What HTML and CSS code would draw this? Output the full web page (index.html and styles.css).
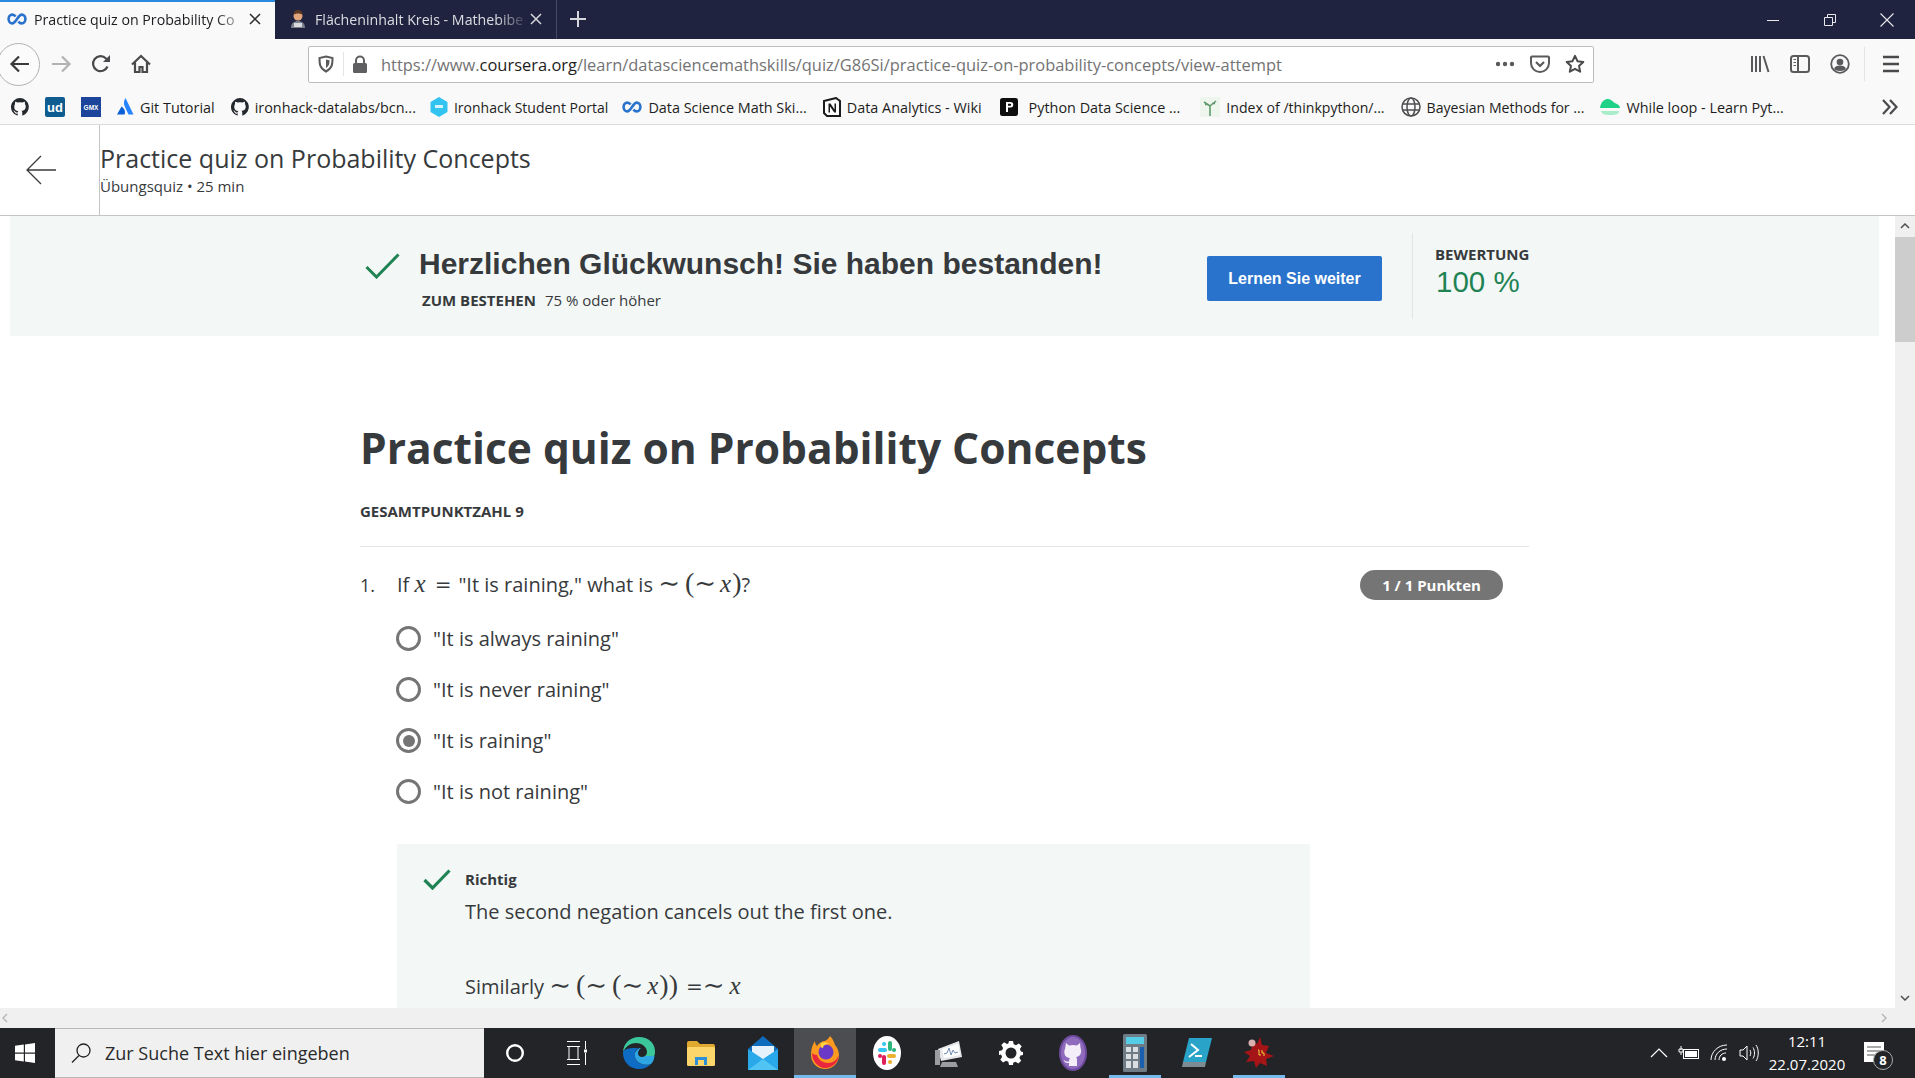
FILE: index.html
```html
<!DOCTYPE html>
<html lang="de">
<head>
    <meta charset="UTF-8">
    <title>Practice quiz on Probability Concepts</title>
    <link rel="stylesheet" href="styles.css">
</head>
<body>

<svg class="defs" width="0" height="0">
    <symbol id="coursera" viewBox="0 0 20 12">
        <path d="M8.6 3.6C7.6 2.2 6.6 1.6 5.3 1.6 3.2 1.6 1.6 3.6 1.6 6s1.6 4.4 3.7 4.4c3.6 0 5.8-8.800 9.400-8.800 2.100 0 3.700 2 3.700 4.400s-1.600 4.400-3.700 4.400c-1.300 0-2.300-.6-3.300-2" fill="none" stroke="#2a73cc" stroke-width="2.600"/>
    </symbol>
    <symbol id="github" viewBox="0 0 16 16">
        <path fill="#24292e" d="M8 0a8 8 0 0 0-2.500 15.600c.4.100.5-.2.500-.4v-1.400c-2.200.5-2.700-1-2.700-1-.4-.9-.9-1.200-.9-1.200-.7-.5.100-.5.100-.5.800.1 1.200.8 1.200.8.700 1.200 1.900.9 2.300.7.100-.5.300-.9.500-1.100-1.800-.2-3.600-.9-3.600-4 0-.9.300-1.600.8-2.100-.1-.2-.4-1 .1-2.100 0 0 .7-.2 2.200.8a7.600 7.600 0 0 1 4 0c1.500-1 2.200-.8 2.200-.8.400 1.100.2 1.900.1 2.100.5.600.8 1.300.8 2.100 0 3.100-1.900 3.700-3.700 3.900.3.300.6.800.6 1.500v2.200c0 .2.100.5.600.4A8 8 0 0 0 8 0z"/>
    </symbol>
</svg>

<header class="tabstrip">
    <div class="tab tab-active">
        <svg class="tab-icon" width="20" height="12"><use href="#coursera"/></svg>
        <span class="tab-title">Practice quiz on Probability Co</span>
        <svg class="tab-close" width="14" height="14" viewBox="0 0 14 14"><path d="M2 2l10 10M12 2L2 12" stroke="#2b2b2b" stroke-width="1.500"/></svg>
    </div>
    <div class="tab tab-other">
        <svg class="tab-icon" width="20" height="20" viewBox="0 0 20 20">
            <path d="M3 19c0-5 3-7 7-7s7 2 7 7z" fill="#7a7f8c"/>
            <circle cx="10" cy="7" r="4.500" fill="#e2a77c"/>
            <path d="M5.500 6c0-4 2-5 4.500-5s4.500 1 4.500 5c-2-2-7-2-9 0z" fill="#5a3a22"/>
            <rect x="6" y="14" width="8" height="4" fill="#d9d9de"/>
        </svg>
        <span class="tab-title">Flächeninhalt Kreis - Mathebibe</span>
        <svg class="tab-close" width="14" height="14" viewBox="0 0 14 14"><path d="M2 2l10 10M12 2L2 12" stroke="#d6d7dc" stroke-width="1.500"/></svg>
    </div>
    <div class="tab-new">
        <svg width="18" height="18" viewBox="0 0 18 18"><path d="M9 1v16M1 9h16" stroke="#d6d7dc" stroke-width="2"/></svg>
    </div>
    <div class="win-controls">
        <button class="win-btn"><svg width="14" height="14" viewBox="0 0 14 14"><path d="M1 7.500h12" stroke="#e8e8ec"/></svg></button>
        <button class="win-btn"><svg width="14" height="14" viewBox="0 0 14 14"><path d="M1.500 4.500h8v8h-8zM4.500 4.500v-3h8v8h-3" fill="none" stroke="#e8e8ec"/></svg></button>
        <button class="win-btn"><svg width="16" height="16" viewBox="0 0 16 16"><path d="M1.500 1.500l13 13M14.500 1.500l-13 13" stroke="#e8e8ec" stroke-width="1.100"/></svg></button>
    </div>
</header>

<nav class="navbar">
    <div class="nav-back">
        <svg width="22" height="22" viewBox="0 0 22 22"><path d="M20 11H3M10 3.500L2.500 11l7.500 7.500" fill="none" stroke="#3a3a3c" stroke-width="2.200"/></svg>
    </div>
    <div class="nav-btn">
        <svg width="22" height="22" viewBox="0 0 22 22"><path d="M2 11h17M12 3.500l7.500 7.500-7.500 7.500" fill="none" stroke="#b2b2b4" stroke-width="2.200"/></svg>
    </div>
    <div class="nav-btn">
        <svg width="22" height="22" viewBox="0 0 22 22"><path d="M17.500 13.500A7.500 7.500 0 1 1 16 5.500L19 8" fill="none" stroke="#4a4a4c" stroke-width="2.200"/><path d="M20 2v7h-7z" fill="#4a4a4c"/></svg>
    </div>
    <div class="nav-btn">
        <svg width="22" height="22" viewBox="0 0 22 22"><path d="M2 11.500L11 3l9 8.500M5 9.500V19h4.500v-5h3v5H17V9.500" fill="none" stroke="#4a4a4c" stroke-width="2.200"/></svg>
    </div>

    <div class="urlbar">
        <svg class="url-shield" width="18" height="18" viewBox="0 0 18 18"><path d="M9 1.500l6.500 1.500c0 6 0 10-6.500 13.500C2.500 13 2.500 9 2.500 3z" fill="none" stroke="#5a5a5c" stroke-width="2"/><path d="M9 4.500l3.500.8c0 3.500-.3 5.500-3.500 7.700z" fill="#5a5a5c"/></svg>
        <span class="url-sep"></span>
        <svg class="url-lock" width="16" height="19" viewBox="0 0 16 19"><path d="M4 8V5.500a4 4 0 0 1 8 0V8" fill="none" stroke="#5f5f61" stroke-width="2"/><rect x="1" y="8" width="14" height="10" rx="1.500" fill="#5f5f61"/></svg>
        <span class="url-text">https://www.<b>coursera.org</b>/learn/datasciencemathskills/quiz/G86Si/practice-quiz-on-probability-concepts/view-attempt</span>
        <svg class="url-action" width="20" height="6" viewBox="0 0 20 6"><circle cx="3" cy="3" r="2.200" fill="#5a5a5c"/><circle cx="10" cy="3" r="2.200" fill="#5a5a5c"/><circle cx="17" cy="3" r="2.200" fill="#5a5a5c"/></svg>
        <svg class="url-action" width="20" height="20" viewBox="0 0 20 20"><path d="M2 2.500h16a1 1 0 0 1 1 1V9a9 9 0 0 1-18 0V3.500a1 1 0 0 1 1-1z" fill="none" stroke="#5a5a5c" stroke-width="2"/><path d="M6 8l4 4 4-4" fill="none" stroke="#5a5a5c" stroke-width="2.200"/></svg>
        <svg class="url-action" width="20" height="20" viewBox="0 0 20 20"><path d="M10 1.800l2.500 5.400 5.800.7-4.300 4 1.200 5.800-5.200-2.900-5.200 2.900 1.200-5.800-4.300-4 5.800-.7z" fill="none" stroke="#4a4a4c" stroke-width="2" stroke-linejoin="round"/></svg>
    </div>

    <div class="nav-tools">
        <div class="nav-btn">
            <svg width="20" height="20" viewBox="0 0 20 20"><path d="M2 2v16M6 2v16M10 2v16M13.500 2l5 16" fill="none" stroke="#5a5a5c" stroke-width="2"/></svg>
        </div>
        <div class="nav-btn">
            <svg width="20" height="20" viewBox="0 0 20 20"><rect x="1" y="2" width="18" height="16" rx="2.500" fill="none" stroke="#5a5a5c" stroke-width="2"/><path d="M8 2v16" stroke="#5a5a5c" stroke-width="2"/><path d="M3.500 5.500h2.500M3.500 8.500h2.500M3.500 11.500h2.500" stroke="#5a5a5c"/></svg>
        </div>
        <div class="nav-btn">
            <svg width="20" height="20" viewBox="0 0 20 20"><circle cx="10" cy="10" r="8.800" fill="none" stroke="#5a5a5c" stroke-width="1.800"/><circle cx="10" cy="8" r="3.300" fill="#5a5a5c"/><path d="M4 15c1-3 3-3.500 6-3.500s5 .5 6 3.500c-2 2.600-10 2.600-12 0z" fill="#5a5a5c"/></svg>
        </div>
        <span class="nav-sep"></span>
        <div class="nav-btn">
            <svg width="18" height="20" viewBox="0 0 18 20"><path d="M1 3h16M1 10h16M1 17h16" stroke="#4a4a4c" stroke-width="2.400"/></svg>
        </div>
    </div>
</nav>

<div class="bookmarks">
    <span class="bm">
        <svg width="18" height="18"><use href="#github"/></svg>
    </span>
    <span class="bm">
        <svg width="20" height="20" viewBox="0 0 20 20"><rect width="20" height="20" rx="2" fill="#0f5c91"/><text x="10" y="15" class="fav-ud">ud</text></svg>
    </span>
    <span class="bm">
        <svg width="20" height="20" viewBox="0 0 20 20"><rect width="20" height="20" fill="#1c449b"/><text x="10" y="12.500" class="fav-gmx">GMX</text></svg>
    </span>
    <span class="bm">
        <svg width="17" height="18" viewBox="0 0 17 18"><path d="M8.500 0c-2 3-2 6-.5 9l3.500 7.500h5z" fill="#2684ff"/><path d="M4.500 8.500L0 16.500h7.500c1-2.500.5-5.500-3-8z" fill="#0a5fd6"/></svg>
        <span>Git Tutorial</span>
    </span>
    <span class="bm bm-less">
        <svg width="18" height="18"><use href="#github"/></svg>
        <span>ironhack-datalabs/bcn...</span>
    </span>
    <span class="bm bm-portal bm-less">
        <svg width="18" height="20" viewBox="0 0 18 20"><path d="M9 0l8.500 5v10L9 20 .5 15V5z" fill="#32c3f0"/><rect x="5" y="8" width="8" height="3" fill="#d5f3fc"/></svg>
        <span>Ironhack Student Portal</span>
    </span>
    <span class="bm">
        <svg width="20" height="12"><use href="#coursera"/></svg>
        <span>Data Science Math Ski...</span>
    </span>
    <span class="bm bm-more-gap">
        <svg width="18" height="20" viewBox="0 0 18 20"><path d="M1 4l12-3 4 3v15H4l-3-3z" fill="#fff" stroke="#1b1b1b" stroke-width="2"/><path d="M5.500 6.500h2l4 6v-6H13v9h-1.800l-4.200-6v6H5.500z" fill="#1b1b1b"/></svg>
        <span>Data Analytics - Wiki</span>
    </span>
    <span class="bm bm-python">
        <svg width="18" height="18" viewBox="0 0 18 18"><rect width="18" height="18" rx="2.500" fill="#0e0e0e"/><path d="M6 4h4.500a2.500 2.500 0 0 1 0 5.500H8V14H6zM8 5.800v2h2.200a1 1 0 0 0 0-2z" fill="#fff"/></svg>
        <span>Python Data Science ...</span>
    </span>
    <span class="bm bm-tight">
        <svg width="20" height="20" viewBox="0 0 20 20"><rect width="20" height="20" fill="#eef5ec"/><path d="M10 19V8M10 9L4 5M10 9l6-5M5 7.500h3M12 6.500h3" stroke="#5d9a6c" stroke-width="1.600" fill="none"/></svg>
        <span>Index of /thinkpython/...</span>
    </span>
    <span class="bm bm-tight">
        <svg width="20" height="20" viewBox="0 0 20 20" fill="none" stroke="#4f4f51" stroke-width="1.500"><circle cx="10" cy="10" r="9"/><ellipse cx="10" cy="10" rx="4" ry="9"/><path d="M1.500 7h17M1.500 13h17"/></svg>
        <span>Bayesian Methods for ...</span>
    </span>
    <span class="bm">
        <svg width="20" height="18" viewBox="0 0 20 18"><path d="M0 10C1 3 5 1 8 1c3 0 5 3 8 4.500 2 1 4 2 4 4.500z" fill="#1ed287"/><path d="M1 13h18c0 3-3 4-9 4s-8-1-9-4z" fill="#a8ecc9"/></svg>
        <span>While loop - Learn Pyt...</span>
    </span>
    <svg class="bm-more" width="18" height="16" viewBox="0 0 18 16"><path d="M2 1l6.500 7L2 15M9 1l6.500 7L9 15" fill="none" stroke="#4a4a4c" stroke-width="2.200"/></svg>
</div>

<div class="quiz-header">
    <div class="quiz-back">
        <svg width="32" height="32" viewBox="0 0 32 32"><path d="M31 16H2M16 2L2 16l14 14" fill="none" stroke="#3a3a3a" stroke-width="1.300"/></svg>
    </div>
    <div class="quiz-heading">
        <div class="quiz-title">Practice quiz on Probability Concepts</div>
        <div class="quiz-sub">Übungsquiz • 25 min</div>
    </div>
</div>

<div class="viewport">
    <div class="page">
        <section class="banner">
            <svg class="banner-check" width="35" height="26" viewBox="0 0 35 26"><path d="M1.500 14l10 10L33.500 1.500" fill="none" stroke="#1f8354" stroke-width="3"/></svg>
            <div class="banner-text">
                <h2 class="banner-title">Herzlichen Glückwunsch! Sie haben bestanden!</h2>
                <p class="banner-pass"><b>ZUM BESTEHEN</b><span>75 % oder höher</span></p>
            </div>
            <button class="btn-next">Lernen Sie weiter</button>
            <div class="score">
                <div class="score-label">BEWERTUNG</div>
                <div class="score-value">100 %</div>
            </div>
        </section>

        <main class="content">
            <h1 class="content-title">Practice quiz on Probability Concepts</h1>
            <div class="total">GESAMTPUNKTZAHL 9</div>

            <div class="question">
                <span class="q-num">1.</span>
                <div class="q-body">
                    <div class="q-row">
                        <p class="q-text">If <i class="mi">x</i><span class="mo mo-eq">=</span>"It is raining," what is <span class="mo">∼</span><span class="paren">(</span><span class="mo mo-in">∼</span><i class="mi">x</i><span class="paren">)</span>?</p>
                        <span class="points">1 / 1 Punkten</span>
                    </div>

                    <div class="options">
                        <label class="option"><span class="radio"></span>"It is always raining"</label>
                        <label class="option"><span class="radio"></span>"It is never raining"</label>
                        <label class="option"><span class="radio radio-on"></span>"It is raining"</label>
                        <label class="option"><span class="radio"></span>"It is not raining"</label>
                    </div>

                    <div class="feedback">
                        <svg class="feedback-check" width="28" height="21" viewBox="0 0 28 21"><path d="M1.500 11l8 8L26.500 1.500" fill="none" stroke="#1f8354" stroke-width="3.200"/></svg>
                        <div>
                            <div class="feedback-label">Richtig</div>
                            <p class="feedback-text">The second negation cancels out the first one.</p>
                            <p class="feedback-text feedback-math">Similarly <span class="mo">∼</span><span class="paren">(</span><span class="mo">∼</span><span class="paren">(</span><span class="mo mo-in">∼</span><i class="mi">x</i><span class="paren">))</span><span class="mo mo-eq2">=</span><span class="mo">∼</span><i class="mi">x</i></p>
                        </div>
                    </div>
                </div>
            </div>
        </main>
    </div>

    <div class="vscroll">
        <svg class="scroll-arrow" width="10" height="6" viewBox="0 0 10 6"><path d="M1 5l4-4 4 4" fill="none" stroke="#505050" stroke-width="1.500"/></svg>
        <div class="vscroll-thumb"></div>
        <svg class="scroll-arrow scroll-arrow-end" width="10" height="6" viewBox="0 0 10 6"><path d="M1 1l4 4 4-4" fill="none" stroke="#505050" stroke-width="1.500"/></svg>
    </div>
</div>

<div class="hscroll">
    <svg width="6" height="10" viewBox="0 0 6 10"><path d="M5 1L1 5l4 4" fill="none" stroke="#b8b8b8" stroke-width="1.500"/></svg>
    <svg width="6" height="10" viewBox="0 0 6 10"><path d="M1 1l4 4-4 4" fill="none" stroke="#b8b8b8" stroke-width="1.500"/></svg>
</div>

<footer class="taskbar">
    <div class="start">
        <svg width="20" height="20" viewBox="0 0 20 20"><path d="M0 2.800l8.800-1.200v7.900H0zM10 1.400L20 0v9.500H10zM0 10.700h8.800v7.800L0 17.300zM10 10.700h10V20l-10-1.400z" fill="#fff"/></svg>
    </div>
    <div class="search">
        <svg width="22" height="22" viewBox="0 0 22 22"><circle cx="13.500" cy="8.500" r="6.500" fill="none" stroke="#222" stroke-width="1.300"/><path d="M9 13.500L2 20.500" stroke="#222" stroke-width="1.300"/></svg>
        <span>Zur Suche Text hier eingeben</span>
    </div>
    <div class="task-icons">
        <div class="task"><svg width="20" height="20" viewBox="0 0 20 20"><circle cx="10" cy="10" r="7.800" fill="none" stroke="#fff" stroke-width="2.400"/></svg></div>
        <div class="task"><svg width="22" height="24" viewBox="0 0 22 24" fill="none" stroke="#fff"><path d="M1 .5h13M1 23.500h13M3 5.500h9v13H3zM1 5.500h13M1 18.500h13M19.500 0v8M19.500 12v12"/><rect x="18" y="8.500" width="3" height="3" fill="#fff" stroke="none"/></svg></div>
        <div class="task">
            <svg width="32" height="32" viewBox="0 0 32 32"><path d="M16 0C7 0 .5 6.500 0 15c3-6 8-9 13-9 6 0 11 4 11 9 0 2-1 3-2 4h9c1-1 1-3 1-5C32 6 25 0 16 0z" fill="#3cc79a"/><path d="M0 15c-.5 9 6 17 16 17 5 0 9-2 12-5-3 1-6 1-9 0-5-1.500-8-6-7-11 .3-2 1.500-4 3-5-7 0-13 0-15 4z" fill="#0f6cc4"/><path d="M12 16c-1 5 2 9.500 7 11 3 1 6 1 9 0 2-2 3-4 3.500-8H22c-3 2-7 1-7-3 0-2 1-3 3-5-3 0-5 2-6 5z" fill="#2fa6e4"/></svg>
        </div>
        <div class="task">
            <svg width="28" height="26" viewBox="0 0 28 26"><path d="M0 3a2 2 0 0 1 2-2h8l3 3h13a2 2 0 0 1 2 2v4H0z" fill="#e0a930"/><rect y="7" width="28" height="19" rx="1.500" fill="#fbd66b"/><path d="M8 25v-8h12v8h-3v-5h-6v5z" fill="#2d8fd5"/></svg>
        </div>
        <div class="task">
            <svg width="30" height="34" viewBox="0 0 30 34"><path d="M0 13L15 0l15 13v20H0z" fill="#0f6cbd"/><path d="M4 10h22v8L15 25 4 18z" fill="#e6f2fb"/><path d="M0 13l15 10 15-10v21H0z" fill="#29a8ea"/><path d="M0 34l15-11 15 11z" fill="#50c4f3"/></svg>
        </div>
        <div class="task task-active">
            <svg width="30" height="34" viewBox="0 0 30 34"><path d="M20 1c3 3 4 6 5 9 2 2 4 6 4 10a14 14 0 0 1-28 0C1 15 2 10 5 6c0 3 1 4 2 5 2-3 5-5 8-5 2-1 4-3 5-5z" fill="#fb9a1f"/><path d="M2 18c0 8 6 15 13 15s13-5 14-13c-2 5-6 8-11 8-6 0-10-4-11-8-2 0-4-1-5-2z" fill="#e8273f"/><circle cx="16" cy="17" r="7.500" fill="#6a39c6"/><path d="M11 8c3-1 6-1 8 1-4 0-6 2-6 4-2 0-3-2-2-5z" fill="#ffd23f"/></svg>
        </div>
        <div class="task">
            <svg width="28" height="34" viewBox="0 0 28 34"><ellipse cx="14" cy="17" rx="14" ry="17" fill="#fff"/><g stroke-width="4" stroke-linecap="round" fill="none"><path d="M7 14h5M11 8h.1" stroke="#36c5f0"/><path d="M17 7v6M21 14h.1" stroke="#2eb67d"/><path d="M21 20h-5M17 26h.1" stroke="#ecb22e"/><path d="M11 27v-6M7 20h.1" stroke="#e01e5a"/></g></svg>
        </div>
        <div class="task">
            <svg width="28" height="32" viewBox="0 0 28 32"><path d="M3 12L24 4l3 16-21 4z" fill="#e7e8ea"/><path d="M7 12l16-5 2 11-16 3z" fill="#fff"/><path d="M9 17l3-1 2-5 2 7 2-5 2 3 3-1" fill="none" stroke="#6f8db5"/><path d="M0 13h5v15H0zM7 25h14l2 5H5z" fill="#9b9da1"/></svg>
        </div>
        <div class="task">
            <svg width="24" height="24" viewBox="0 0 24 24"><path d="M10 0h4l.7 3.300 2.300 1 2.900-1.800 2.800 2.800L20.900 8.100l1 2.300L24 11v3l-2.600.6-1 2.300 1.800 2.900-2.800 2.800-2.900-1.800-2.300 1L14 24h-4l-.7-3.200-2.300-1-2.900 1.800-2.800-2.800 1.800-2.900-1-2.300L0 14v-4l3.100-.7 1-2.300L2.300 4.100 5.100 1.300 8 3.100l1.300-.7z" fill="#fff"/><circle cx="12" cy="12" r="5.500" fill="#232427"/></svg>
        </div>
        <div class="task">
            <svg width="28" height="36" viewBox="0 0 28 36"><ellipse cx="14" cy="18" rx="14" ry="18" fill="#6e4a9e"/><ellipse cx="14" cy="18" rx="12" ry="16" fill="#8f6bbd"/><path d="M7 8l3 2.500c2.500-.7 5.500-.7 8 0L21 8l.5 5c1 1.500 1 5-.5 7-1.500 1.500-3.500 2-4 2 .7.700 1 1.500 1 3v6h-8v-3c-3 .5-4.500-1-5.500-3 1.500.5 2.500 2 5.500 1.500 0-1.500 .5-3 1-3.500-1 0-3-.5-4.500-2-1.500-2-1.500-5.500-.5-7z" fill="#f4eef9"/></svg>
        </div>
        <div class="task task-open">
            <svg width="24" height="38" viewBox="0 0 24 38"><rect width="24" height="38" rx="1.500" fill="#6f7c85"/><rect x="3" y="3" width="18" height="7" fill="#55cde6"/><g fill="#d9dee2"><rect x="3" y="13" width="5" height="5"/><rect x="10" y="13" width="5" height="5"/><rect x="3" y="20" width="5" height="5"/><rect x="10" y="20" width="5" height="5"/><rect x="3" y="27" width="5" height="7"/><rect x="10" y="27" width="5" height="7"/></g><rect x="17" y="13" width="4" height="21" fill="#1a5fb0"/></svg>
        </div>
        <div class="task">
            <svg width="30" height="30" viewBox="0 0 30 30"><path d="M7 0h23l-6 24H1z" fill="#2aa3c9"/><path d="M1 24h23l-1 5H0z" fill="#7d8c92"/><path d="M9 6l7 6-9 7" fill="none" stroke="#fff" stroke-width="2"/><path d="M13 18h7" stroke="#fff" stroke-width="2"/></svg>
        </div>
        <div class="task task-open">
            <svg width="30" height="32" viewBox="0 0 30 32"><path d="M9 5l4 2 3-7 2 8 7 1-3 7 8 3-8 3 1 7-7-3-4 5-2-7-8 1 4-6-6-4 7-2z" fill="#a51417"/><circle cx="8" cy="6" r="3.500" fill="#d8b0b0"/><path d="M14 13h1v5h2M18 13v3h2v3" fill="none" stroke="#f0d23c"/></svg>
        </div>
    </div>
    <div class="tray">
        <div class="tray-item"><svg width="18" height="10" viewBox="0 0 18 10"><path d="M1 9l8-8 8 8" fill="none" stroke="#fff" stroke-width="1.200"/></svg></div>
        <div class="tray-item"><svg width="22" height="14" viewBox="0 0 22 14"><rect x="5.500" y="3.500" width="15" height="9" fill="none" stroke="#fff"/><rect x="7" y="5" width="12" height="6" fill="#fff"/><path d="M3 0v4M1 3h4v3H1zM3 6v3" stroke="#fff" fill="none"/></svg></div>
        <div class="tray-item"><svg width="18" height="18" viewBox="0 0 18 18" fill="none" stroke="#fff"><path d="M1 16C1 8 8 1 17 1M5 16c0-6 5-11 12-11M9 16c0-4 3-7 7-7"/><circle cx="14" cy="15" r="2" fill="#fff" stroke="none"/></svg></div>
        <div class="tray-item"><svg width="20" height="18" viewBox="0 0 20 18" fill="none" stroke="#fff"><path d="M1 6h3l4-4v14l-4-4H1zM11 6c1 2 1 4 0 6M14 3.500c2 3 2 8 0 11M17 1c3 4 3 12 0 16"/></svg></div>
        <div class="clock">
            <span>12:11</span>
            <span>22.07.2020</span>
        </div>
        <div class="notify">
            <svg width="22" height="22" viewBox="0 0 22 22"><path d="M0 0h20v20H0z" fill="#fff"/><path d="M3 5h14M3 9h14M3 13h10" stroke="#555"/></svg>
            <span class="notify-count">8</span>
        </div>
    </div>
</footer>

</body>
</html>
```

FILE: styles.css
```css
* {
    box-sizing: border-box;
}

html, body {
    margin: 0;
    padding: 0;
}

body {
    width: 1915px;
    height: 1078px;
    overflow: hidden;
    display: flex;
    flex-direction: column;
    background-color: #fff;
    color: #373a3c;
    font-family: "Open Sans", sans-serif;
}

p, h1, h2 {
    margin: 0;
}

svg {
    display: block;
    flex-shrink: 0;
}

.defs {
    position: absolute;
}

/* browser tabs */
.tabstrip {
    height: 39px;
    flex-shrink: 0;
    display: flex;
    background-color: #20233f;
}

.tab {
    display: flex;
    align-items: center;
    font-size: 14.200px;
}

.tab-active {
    width: 275px;
    padding: 0 13px 3px 7px;
    background-color: #f9f9fa;
    border-top: 2px solid #2a8adf;
    color: #1d1d20;
}

.tab-other {
    width: 282px;
    padding: 0 13px 1px 13px;
    border-right: 1px solid #474a63;
    color: #dcdde2;
}

.tab-icon {
    margin-right: 7px;
}

.tab-title {
    flex: 1;
    white-space: nowrap;
    -webkit-mask-image: linear-gradient(to right, #000 85%, transparent 100%);
    mask-image: linear-gradient(to right, #000 85%, transparent 100%);
}

.tab-new {
    width: 42px;
    padding-bottom: 2px;
    display: flex;
    align-items: center;
    justify-content: center;
}

.win-controls {
    margin-left: auto;
    display: flex;
}

.win-btn {
    width: 57px;
    padding: 0;
    border: none;
    background: none;
    display: flex;
    align-items: center;
    justify-content: center;
}

/* toolbar */
.navbar {
    height: 52px;
    flex-shrink: 0;
    padding-bottom: 2px;
    display: flex;
    align-items: center;
    background-color: #f9f9fa;
}

.nav-back {
    width: 43px;
    height: 43px;
    margin-left: -3px;
    margin-right: 1px;
    padding-left: 3px;
    border: 1px solid #b1b1b3;
    border-radius: 50%;
    background-color: #fbfbfb;
    display: flex;
    align-items: center;
    justify-content: center;
}

.nav-btn {
    width: 40px;
    display: flex;
    justify-content: center;
}

.urlbar {
    width: 1286px;
    height: 37px;
    margin-left: 147px;
    padding: 0 8px 0 8px;
    display: flex;
    align-items: center;
    background-color: #fff;
    border: 1px solid #bdbdbf;
    border-radius: 2px;
}

.url-sep {
    width: 1px;
    height: 24px;
    margin: 0 8px 0 8px;
    background-color: #e4e4e6;
}

.url-lock {
    margin-right: 13px;
}

.url-text {
    flex: 1;
    font-size: 16.450px;
    color: #737373;
    white-space: nowrap;
}

.url-text b {
    font-weight: 400;
    color: #1d1d20;
}

.url-action {
    margin-left: 15px;
}

.nav-tools {
    margin-left: 146px;
    display: flex;
    align-items: center;
}

.nav-sep {
    width: 1px;
    height: 34px;
    margin: 0 6px 0 4px;
    background-color: #e4e4e6;
}

/* bookmarks toolbar */
.bookmarks {
    height: 34px;
    flex-shrink: 0;
    padding: 0 0 1px 11px;
    display: flex;
    align-items: center;
    gap: 16px;
    background-color: #f9f9fa;
    border-bottom: 1px solid #dcdcde;
    font-size: 14.400px;
    color: #1d1d20;
}

.bm {
    display: flex;
    align-items: center;
    gap: 6px;
    white-space: nowrap;
}

.bm-less {
    margin-right: -2px;
}

.bm-more-gap {
    margin-right: 2px;
}

.bm-portal {
    font-size: 14px;
}

.bm-tight {
    font-size: 14.100px;
}

.bm-python {
    margin-right: 4px;
}

.bm-python svg {
    margin-right: 5px;
}

.bm-more {
    margin-left: auto;
    margin-right: 16px;
}

/* page header, runs the full width above the scrollbar */
.quiz-header {
    height: 91px;
    flex-shrink: 0;
    display: flex;
    border-bottom: 1px solid #c4c4c4;
}

.quiz-back {
    width: 100px;
    padding-left: 25px;
    display: flex;
    align-items: center;
    border-right: 1px solid #c4c4c4;
}

.quiz-heading {
    padding-top: 15px;
}

.quiz-title {
    font-size: 25px;
    line-height: 36px;
}

.quiz-sub {
    font-size: 15px;
    line-height: 20px;
}

/* page area */
.viewport {
    flex: 1;
    min-height: 0;
    display: flex;
}

.page {
    flex: 1;
    min-width: 0;
    overflow: hidden;
}

.banner {
    height: 120px;
    margin: 0 16px 0 10px;
    padding-left: 355px;
    display: flex;
    align-items: flex-start;
    background-color: #f3f8f7;
}

.banner-check {
    margin-top: 37px;
}

.banner-text {
    width: 807px;
    padding: 30px 0 0 19px;
}

.banner-title {
    font-family: "Liberation Sans", sans-serif;
    font-size: 30px;
    line-height: 36px;
    font-weight: 700;
    color: #373a3c;
}

.banner-pass {
    margin-top: 7px;
    padding-left: 3px;
    display: flex;
    gap: 9px;
    font-size: 15px;
    line-height: 22px;
}

.btn-next {
    width: 175px;
    height: 45px;
    margin-top: 40px;
    padding: 0;
    border: none;
    border-radius: 2px;
    background-color: #2a73cc;
    color: #fff;
    font-family: "Liberation Sans", sans-serif;
    font-size: 16px;
    font-weight: 700;
}

.score {
    height: 86px;
    margin: 17px 0 0 30px;
    padding: 11px 0 0 22px;
    border-left: 1px solid #e1e6e5;
}

.score-label {
    font-size: 15px;
    line-height: 20px;
    font-weight: 700;
}

.score-value {
    padding-left: 1px;
    font-family: "Liberation Sans", sans-serif;
    font-size: 29.500px;
    line-height: 36px;
    color: #1f8354;
}

.content {
    width: 1169px;
    margin-left: 360px;
    padding-top: 83px;
}

.content-title {
    font-size: 42.500px;
    line-height: 58px;
    font-weight: 700;
}

.total {
    margin-top: 24px;
    padding-bottom: 25px;
    font-size: 15px;
    line-height: 20px;
    font-weight: 700;
    border-bottom: 1px solid #e5e5e5;
}

.question {
    display: flex;
    padding-top: 23px;
}

.q-num {
    width: 37px;
    font-size: 18px;
    line-height: 30px;
}

.q-body {
    flex: 1;
}

.q-row {
    display: flex;
    justify-content: space-between;
    padding-right: 26px;
}

.q-text {
    font-size: 20px;
    line-height: 30px;
    white-space: nowrap;
}

/* math, spaced by hand since there is no KaTeX here */
.mi {
    margin-right: 1px;
    font-family: "Liberation Serif", serif;
    font-size: 25px;
    line-height: 20px;
}

.mo {
    margin-right: 5px;
    font-family: "DejaVu Serif", serif;
    font-size: 26px;
    line-height: 20px;
}

.mo-eq {
    margin: 0 7px 0 8px;
    font-size: 20px;
}

.mo-in {
    margin-right: 4px;
}

.mo-eq2 {
    margin: 0 0 0 8px;
    font-size: 20px;
}

.paren {
    font-family: "Liberation Serif", serif;
    font-size: 28px;
    line-height: 20px;
    font-weight: 400;
}

.points {
    width: 143px;
    height: 30px;
    border-radius: 15px;
    background-color: #757575;
    color: #fff;
    font-size: 15px;
    font-weight: 700;
    line-height: 30px;
    text-align: center;
}

.options {
    margin-top: 13px;
    display: flex;
    flex-direction: column;
}

.option {
    height: 51px;
    display: flex;
    align-items: center;
    gap: 12px;
    font-size: 20px;
}

.radio {
    width: 25px;
    height: 25px;
    margin-left: -1px;
    display: flex;
    align-items: center;
    justify-content: center;
    border: 3px solid #757575;
    border-radius: 50%;
}

.radio-on::after {
    content: "";
    width: 12px;
    height: 12px;
    border-radius: 50%;
    background-color: #757575;
}

.feedback {
    width: 913px;
    height: 200px;
    margin-top: 27px;
    padding: 24px 0 0 26px;
    display: flex;
    gap: 14px;
    background-color: #f3f8f7;
}

.feedback-check {
    margin-top: 1px;
}

.feedback-label {
    font-size: 15px;
    line-height: 22px;
    font-weight: 700;
}

.feedback-text {
    margin-top: 7px;
    font-size: 20px;
    line-height: 30px;
}

.feedback-math {
    margin-top: 45px;
    white-space: nowrap;
}

/* scrollbars */
.vscroll {
    width: 20px;
    flex-shrink: 0;
    display: flex;
    flex-direction: column;
    align-items: center;
    background-color: #f0f0f0;
}

.scroll-arrow {
    margin: 7px 0;
}

.scroll-arrow-end {
    margin-top: auto;
}

.vscroll-thumb {
    width: 100%;
    height: 105px;
    margin-top: 1px;
    background-color: #cdcdcd;
}

.hscroll {
    height: 20px;
    flex-shrink: 0;
    padding: 0 28px 0 2px;
    display: flex;
    align-items: center;
    justify-content: space-between;
    background-color: #f0f0f0;
}

/* windows taskbar */
.taskbar {
    height: 50px;
    flex-shrink: 0;
    display: flex;
    background-color: #232427;
}

.start {
    width: 55px;
    padding-right: 5px;
    display: flex;
    align-items: center;
    justify-content: center;
}

.search {
    width: 429px;
    padding-left: 15px;
    display: flex;
    align-items: center;
    gap: 13px;
    background-color: #f0f0f0;
    border-top: 1px solid #b8b8b8;
    border-bottom: 1px solid #b8b8b8;
    font-size: 18px;
    color: #2a2a2a;
}

.task-icons {
    display: flex;
}

.task {
    width: 62px;
    display: flex;
    align-items: center;
    justify-content: center;
}

.task-active {
    background-color: #4c4d50;
    border-bottom: 3px solid #76b9ed;
}

.task-open {
    position: relative;
}

.task-open::after {
    content: "";
    position: absolute;
    left: 5px;
    right: 5px;
    bottom: 0;
    height: 3px;
    background-color: #76b9ed;
}

.tray {
    margin-left: auto;
    padding-right: 16px;
    display: flex;
    align-items: center;
    color: #fff;
}

.tray-item {
    width: 30px;
    display: flex;
    justify-content: center;
}

.clock {
    width: 84px;
    margin-left: 1px;
    margin-top: -2px;
    display: flex;
    flex-direction: column;
    align-items: center;
    gap: 3px;
    font-size: 15px;
    line-height: 20px;
}

.notify {
    width: 50px;
    padding-left: 15px;
    position: relative;
}

.notify-count {
    position: absolute;
    left: 24px;
    top: 8px;
    width: 20px;
    height: 20px;
    border: 1px solid #aaa;
    border-radius: 50%;
    background-color: #232427;
    font-size: 13px;
    font-weight: 700;
    line-height: 18px;
    text-align: center;
}

.fav-ud {
    font: 700 13px "Liberation Sans", sans-serif;
    fill: #fff;
    text-anchor: middle;
}

.fav-gmx {
    font: 700 6.500px "Liberation Sans", sans-serif;
    fill: #fff;
    text-anchor: middle;
}
```
